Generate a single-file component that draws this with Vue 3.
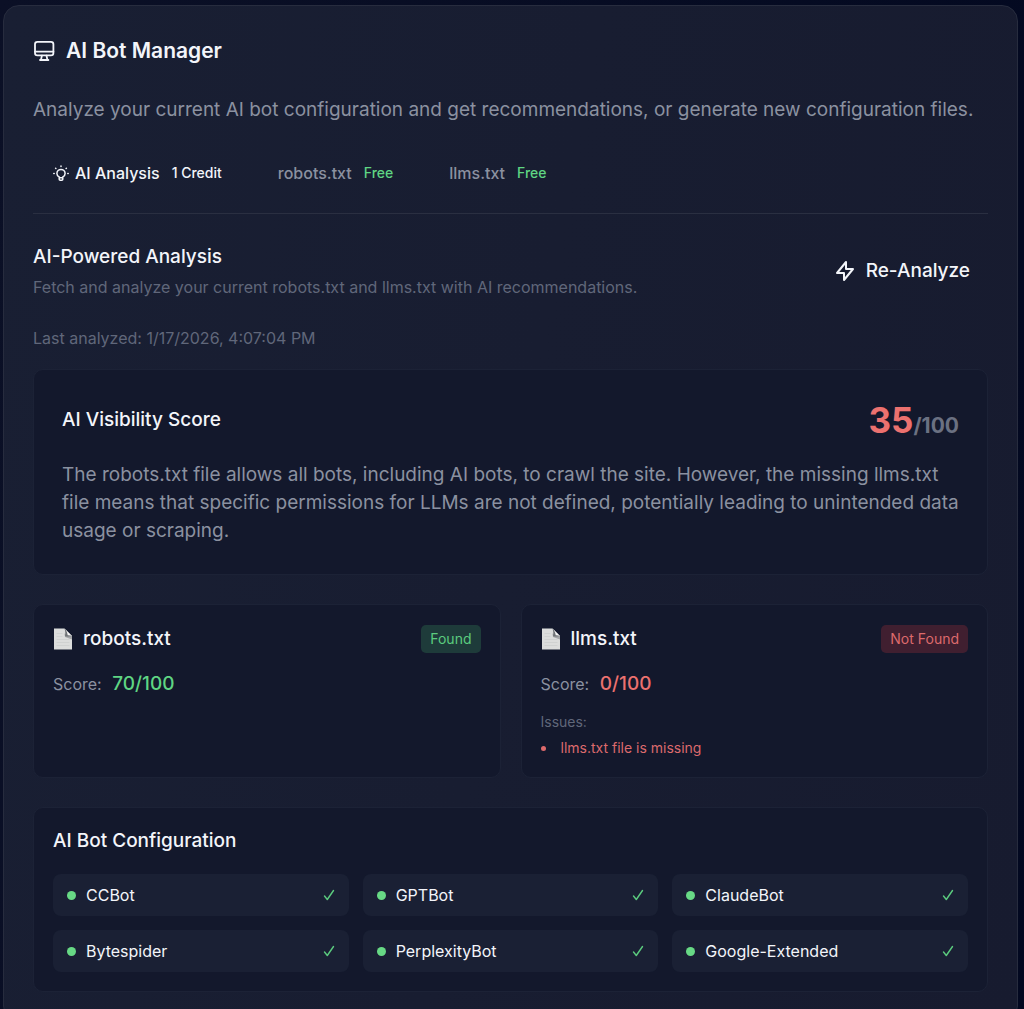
<script setup>
import { ref } from 'vue';

const activeTab = ref('analysis');

const tabs = [
  { id: 'analysis', label: 'AI Analysis', cost: '1 Credit', free: false },
  { id: 'robots', label: 'robots.txt', cost: 'Free', free: true },
  { id: 'llms', label: 'llms.txt', cost: 'Free', free: true }
];

const files = [
  { name: 'robots.txt', found: true, score: 70, issues: [] },
  { name: 'llms.txt', found: false, score: 0, issues: ['llms.txt file is missing'] }
];

const bots = ['CCBot', 'GPTBot', 'ClaudeBot', 'Bytespider', 'PerplexityBot', 'Google-Extended'];
</script>

<template>
  <main class="page">
    <section class="panel">
      <h1 class="title">
        <svg class="title-icon" viewBox="0 0 22 22" fill="none" stroke="currentColor" stroke-width="1.8" stroke-linecap="round" stroke-linejoin="round">
          <rect x="2" y="1.8" width="18.4" height="13.6" rx="2.4" />
          <path d="M2 11.6h18.4M8.9 15.6l-.9 4.2M13.5 15.6l.9 4.2M7 20h8.4" />
        </svg>
        AI Bot Manager
      </h1>
      <p class="intro">Analyze your current AI bot configuration and get recommendations, or generate new configuration files.</p>

      <nav class="tabs">
        <button
          v-for="tab in tabs"
          :key="tab.id"
          type="button"
          class="tab"
          :class="{ active: activeTab === tab.id }"
          @click="activeTab = tab.id"
        >
          <svg v-if="tab.id === 'analysis'" class="bulb" viewBox="0 0 16 16" fill="none" stroke="currentColor" stroke-width="1.5" stroke-linecap="round" stroke-linejoin="round">
            <path d="M6.2 12C4.8 11.3 3.9 10 3.9 8.5a4.1 4.1 0 0 1 8.2 0c0 1.5-.9 2.8-2.3 3.5v2.2a1 1 0 0 1-1 1H7.2a1 1 0 0 1-1-1zM6.2 12.7h3.6" />
            <path d="M8 1v.4M2.6 3.2l.3.3M13.4 3.2l-.3.3M.8 8.5h.4M14.8 8.5h.4" />
          </svg>
          <span>{{ tab.label }}</span>
          <span class="cost" :class="{ free: tab.free }">{{ tab.cost }}</span>
        </button>
      </nav>

      <header class="analysis-head">
        <div>
          <h2>AI-Powered Analysis</h2>
          <p class="hint">Fetch and analyze your current robots.txt and llms.txt with AI recommendations.</p>
        </div>
        <button type="button" class="reanalyze">
          <svg class="bolt" viewBox="0 0 24 24" fill="none" stroke="currentColor" stroke-width="2" stroke-linecap="round" stroke-linejoin="round">
            <path d="M13 10V3L4 14h7v7l9-11h-7z" />
          </svg>
          Re-Analyze
        </button>
      </header>
      <p class="last">Last analyzed: 1/17/2026, 4:07:04 PM</p>

      <article class="card visibility">
        <div class="row">
          <h2>AI Visibility Score</h2>
          <p class="score">35<span>/100</span></p>
        </div>
        <p class="summary">The robots.txt file allows all bots, including AI bots, to crawl the site. However, the missing llms.txt file means that specific permissions for LLMs are not defined, potentially leading to unintended data usage or scraping.</p>
      </article>

      <div class="files">
        <article v-for="file in files" :key="file.name" class="card">
          <div class="row file-row">
            <h3>
              <svg class="file-icon" viewBox="0 0 20 22">
                <path d="M1 .5h10.5L19 8v13.5H1z" fill="#dcdddc" />
                <path d="M11.5 5.5 19 8v3.5L12 9z" fill="#a4a6a8" />
                <path d="M11.5.5 19 8c-2.3.6-4.6.5-7 .2.6-2.7.4-5.2-.5-7.7z" fill="#6f7376" />
                <path d="M12 1l7 7c-1.5-.6-2.9-.8-4.3-.7C14.5 5 13.6 3 12 1z" fill="#f5f5f5" />
                <path d="M3.5 5.5h6M3.5 8.5h6M3.5 11.5h13M3.5 14.5h13M3.5 17.5h13" stroke="#d0d2d1" stroke-width="1" />
              </svg>
              {{ file.name }}
            </h3>
            <span class="badge" :class="file.found ? 'found' : 'missing'">{{ file.found ? 'Found' : 'Not Found' }}</span>
          </div>
          <p class="file-score">Score: <strong :class="file.found ? 'good' : 'bad'">{{ file.score }}/100</strong></p>
          <div v-if="file.issues.length" class="issues">
            <p>Issues:</p>
            <ul>
              <li v-for="issue in file.issues" :key="issue">{{ issue }}</li>
            </ul>
          </div>
        </article>
      </div>

      <article class="card">
        <h2>AI Bot Configuration</h2>
        <ul class="bots">
          <li v-for="bot in bots" :key="bot">
            <i class="dot"></i>
            <span>{{ bot }}</span>
            <svg class="check" viewBox="0 0 12 12" fill="none" stroke="currentColor" stroke-width="1.4" stroke-linecap="round" stroke-linejoin="round">
              <path d="M1.5 7l2.8 3.5 6.2-9" />
            </svg>
          </li>
        </ul>
      </article>
    </section>
  </main>
</template>

<style>
body {
  margin: 0;
  background: linear-gradient(100deg, #0b1026, #020820);
}
</style>

<style scoped>
.page {
  padding: 5px 6px 0 3px;
  font-family: Inter, "Liberation Sans", sans-serif;
  color: #f3f5fa;
}

h1,
h2,
h3,
p,
ul {
  margin: 0;
  padding: 0;
}

ul {
  list-style: none;
}

button {
  border: 0;
  background: none;
  font-family: inherit;
  color: inherit;
  cursor: pointer;
}

svg {
  display: block;
  flex: none;
}

.panel {
  padding: 30px 29px 29px;
  border: 1px solid #272c3e;
  border-radius: 16px;
  background: linear-gradient(100deg, #191f33, #171b2f);
}

.title {
  display: flex;
  align-items: center;
  gap: 11px;
  font-size: 21px;
  font-weight: 600;
  line-height: 30px;
}

.title-icon {
  width: 22px;
  height: 22px;
}

.intro {
  margin-top: 30px;
  font-size: 19px;
  line-height: 28px;
  color: #8b91a0;
}

.tabs {
  display: flex;
  gap: 16px;
  margin-top: 27px;
  padding-bottom: 18px;
  border-bottom: 1px solid #2a2f41;
}

.tab {
  display: flex;
  align-items: center;
  padding: 10px 20px;
  font-size: 16px;
  font-weight: 500;
  line-height: 24px;
  color: #8b91a0;
}

.tab.active {
  color: #f3f5fa;
}

.bulb {
  width: 16px;
  height: 16px;
  margin-right: 6px;
}

.cost {
  margin-left: 12px;
  font-size: 14px;
}

.cost.free {
  color: #5fd583;
}

.analysis-head {
  display: flex;
  align-items: center;
  justify-content: space-between;
  margin-top: 29px;
}

h2,
h3 {
  font-size: 19px;
  font-weight: 500;
  line-height: 28px;
}

.hint,
.last {
  font-size: 16px;
  line-height: 24px;
  color: #60677a;
}

.hint {
  margin-top: 4px;
}

.last {
  margin-top: 27px;
}

.reanalyze {
  display: flex;
  align-items: center;
  gap: 9px;
  padding: 10px 18px;
  font-size: 19px;
  font-weight: 500;
  line-height: 28px;
}

.bolt {
  width: 24px;
  height: 24px;
}

.card {
  padding: 19px;
  border: 1px solid #1c2236;
  border-radius: 10px;
  background: #13182c;
}

.visibility {
  margin-top: 19px;
  padding: 30px 28px 29px;
}

.row {
  display: flex;
  align-items: center;
  justify-content: space-between;
}

.score {
  font-size: 35px;
  font-weight: 700;
  line-height: 40px;
  color: #ec716f;
}

.score span {
  font-size: 21px;
  line-height: 28px;
  color: #6b7182;
}

.summary {
  margin-top: 21px;
  font-size: 19px;
  line-height: 28px;
  color: #8b91a0;
}

.files {
  display: grid;
  grid-template-columns: 1fr 1fr;
  gap: 20px;
  margin: 29px 0;
}

.file-row {
  height: 30px;
}

h3 {
  display: flex;
  align-items: center;
  gap: 10px;
}

.file-icon {
  width: 20px;
  height: 22px;
}

.badge {
  padding: 4px 9px;
  border-radius: 5px;
  font-size: 14px;
  line-height: 20px;
}

.badge.found {
  background: #1e3b3a;
  color: #5bcb7e;
}

.badge.missing {
  background: #401f30;
  color: #dd6a6c;
}

.file-score {
  margin-top: 16px;
  font-size: 16px;
  line-height: 28px;
  color: #8b91a0;
}

.file-score strong {
  margin-left: 6px;
  font-size: 19px;
  font-weight: 500;
}

.good {
  color: #5fd583;
}

.bad {
  color: #ec716f;
}

.issues {
  margin-top: 14px;
  font-size: 14px;
  line-height: 20px;
  color: #60677a;
}

.issues ul {
  margin-top: 6px;
  list-style: disc inside;
  color: #dd6a6c;
}

.bots {
  display: grid;
  grid-template-columns: repeat(3, 1fr);
  gap: 14px;
  margin-top: 19px;
}

.bots li {
  display: flex;
  align-items: center;
  gap: 10px;
  padding: 9px 14px;
  border-radius: 8px;
  background: #1a2034;
  font-size: 16px;
  line-height: 24px;
}

.dot {
  width: 9px;
  height: 9px;
  border-radius: 50%;
  background: #67d985;
}

.check {
  width: 12px;
  height: 12px;
  margin-left: auto;
  color: #5bcb7e;
}
</style>
